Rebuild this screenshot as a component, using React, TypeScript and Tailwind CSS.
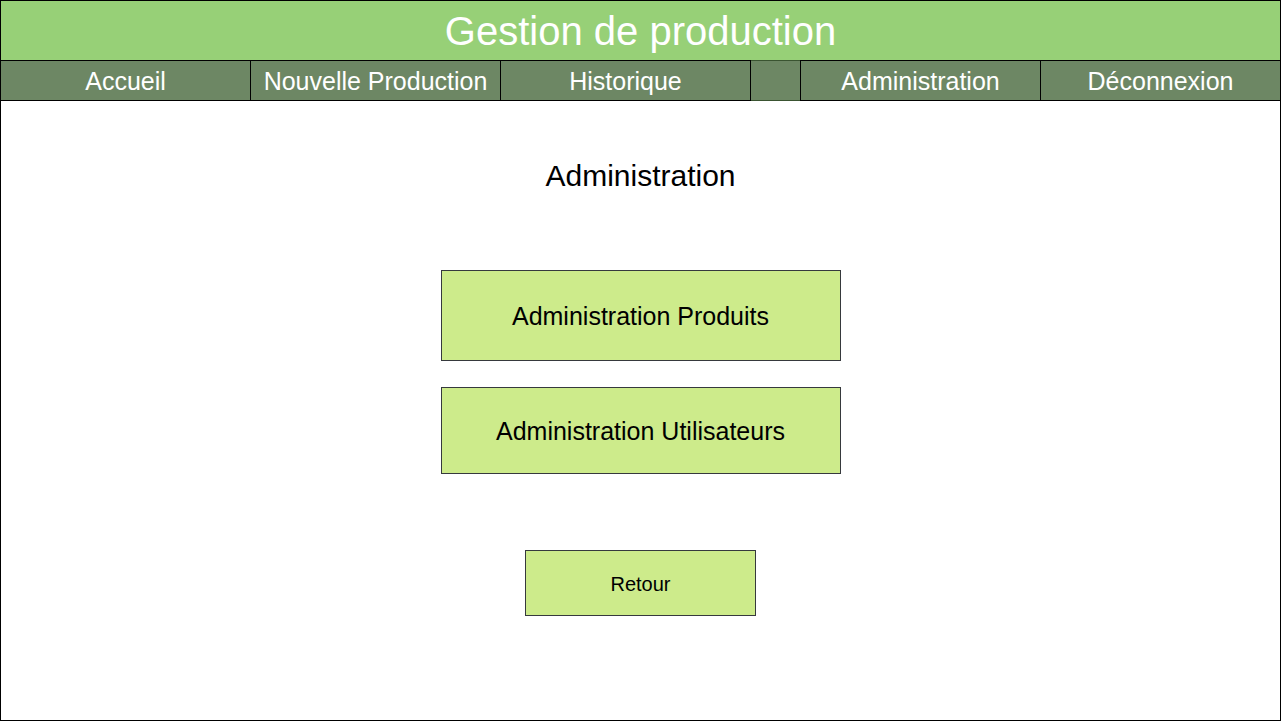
const cell =
  "flex items-center justify-center whitespace-nowrap border-y border-black";
const action =
  "flex items-center justify-center border border-[#36393d] bg-[#cdeb8b] pt-0.5 text-black";

export default function App() {
  return (
    <div className="flex min-h-screen flex-col border border-black bg-white font-['Liberation_Sans',Arial,sans-serif] text-black">
      <header className="flex flex-col text-white">
        <div className="flex h-[59px] items-center justify-center bg-[#97d077]">
          <h1 className="text-[40px] leading-[46px]">Gestion de production</h1>
        </div>
        <nav className="grid h-[41px] grid-cols-[250fr_250fr_250fr_49fr_241fr_239fr] bg-[#6d8764] text-[25px] leading-7">
          <a href="#accueil" className={`${cell} border-r`}>Accueil</a>
          <a href="#production" className={`${cell} border-r`}>Nouvelle Production</a>
          <a href="#historique" className={`${cell} border-r`}>Historique</a>
          <span className="border-y border-[#3a5431]" />
          <a href="#administration" className={`${cell} border-x`}>Administration</a>
          <a href="#deconnexion" className={cell}>Déconnexion</a>
        </nav>
      </header>
      <main className="flex flex-col items-center pt-[57px]">
        <h2 className="text-[30px] leading-9">Administration</h2>
        <button type="button" className={`${action} mt-[76px] h-[91px] w-[400px] text-[25px]`}>
          Administration Produits
        </button>
        <button type="button" className={`${action} mt-[26px] h-[87px] w-[400px] text-[25px]`}>
          Administration Utilisateurs
        </button>
        <button type="button" className={`${action} mt-[76px] h-[66px] w-[231px] text-xl`}>
          Retour
        </button>
      </main>
    </div>
  );
}
